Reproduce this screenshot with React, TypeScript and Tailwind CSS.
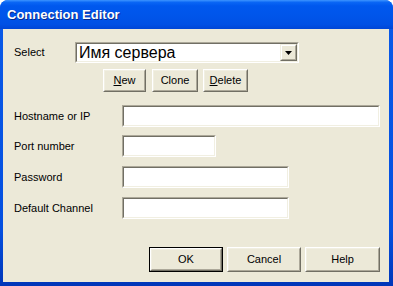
import React from "react";

function Sunken({ className = "", children }: { className?: string; children?: React.ReactNode }) {
  return (
    <div
      className={
        "border border-t-[#aca899] border-l-[#aca899] border-b-white border-r-white " + className
      }
    >
      <div className="w-full h-full border border-t-[#716f64] border-l-[#716f64] border-b-[#f1efe2] border-r-[#f1efe2] bg-white flex items-center">
        {children}
      </div>
    </div>
  );
}

function Btn({
  className = "",
  children,
  isDefault = false,
}: {
  className?: string;
  children: React.ReactNode;
  isDefault?: boolean;
}) {
  const inner = (
    <div className="w-full h-full border border-t-white border-l-white border-b-[#716f64] border-r-[#716f64]">
      <div className="w-full h-full border border-t-[#f1efe2] border-l-[#f1efe2] border-b-[#aca899] border-r-[#aca899] bg-[#ece9d8] flex items-center justify-center text-[11px] text-black">
        {children}
      </div>
    </div>
  );
  if (isDefault) {
    return <div className={"border border-black " + className}>{inner}</div>;
  }
  return <div className={className}>{inner}</div>;
}

export default function App() {
  return (
    <div
      className="w-[393px] h-[286px] flex flex-col rounded-t-[8px] overflow-hidden bg-[linear-gradient(to_bottom,#0a5ae8,#0550e0_80%,#0036b8)]"
      style={{ fontFamily: '"Liberation Sans", Arial, sans-serif' }}
    >
      <div className="h-[29px] shrink-0 flex items-center pl-[7px] pt-[1px] bg-[linear-gradient(to_bottom,#3d95ff_0%,#0a66f5_8%,#0058ee_20%,#0055ea_55%,#0050e4_85%,#0046d6_100%)]">
        <span className="text-white font-bold text-[13px] [text-shadow:1px_1px_0_#0a2a8a]">
          Connection Editor
        </span>
      </div>
      <div className="flex-1 flex flex-col ml-[3px] mr-[4px] mb-[4px] bg-[#ece9d8] pl-[11px] text-[11px] text-black">
        <div className="mt-[13px] flex items-center h-[21px]">
          <div className="w-[61px]">Select</div>
          <Sunken className="w-[224px] h-[21px]">
            <span className="pl-[2px] text-[16px] leading-none flex-1">Имя сервера</span>
            <div className="w-[17px] h-[17px] mr-[0px] border border-t-[#f1efe2] border-l-[#f1efe2] border-b-[#716f64] border-r-[#716f64]">
              <div className="w-full h-full border border-t-white border-l-white border-b-[#aca899] border-r-[#aca899] bg-[#ece9d8] flex items-center justify-center">
                <svg width="7" height="4" viewBox="0 0 7 4">
                  <path d="M0 0H7L3.5 4Z" fill="#000" />
                </svg>
              </div>
            </div>
          </Sunken>
        </div>
        <div className="mt-[6px] flex h-[23px] ml-[89px]">
          <Btn className="w-[43px] h-[23px]">
            <span>
              <span className="underline">N</span>ew
            </span>
          </Btn>
          <Btn className="w-[46px] h-[23px] ml-[6px]">Clone</Btn>
          <Btn className="w-[45px] h-[23px] ml-[5px]">
            <span>
              <span className="underline">D</span>elete
            </span>
          </Btn>
        </div>
        <div className="mt-[13px] flex items-center h-[22px]">
          <div className="w-[108px]">Hostname or IP</div>
          <Sunken className="w-[258px] h-[22px]" />
        </div>
        <div className="mt-[8px] flex items-center h-[22px]">
          <div className="w-[108px]">Port number</div>
          <Sunken className="w-[94px] h-[22px]" />
        </div>
        <div className="mt-[9px] flex items-center h-[22px]">
          <div className="w-[108px]">Password</div>
          <Sunken className="w-[167px] h-[22px]" />
        </div>
        <div className="mt-[9px] flex items-center h-[22px]">
          <div className="w-[108px]">Default Channel</div>
          <Sunken className="w-[167px] h-[22px]" />
        </div>
        <div className="mt-auto mb-[10px] mr-[9px] flex justify-end">
          <Btn isDefault className="w-[74px] h-[25px]">OK</Btn>
          <Btn className="w-[74px] h-[25px] ml-[4px]">Cancel</Btn>
          <Btn className="w-[75px] h-[25px] ml-[4px]">Help</Btn>
        </div>
      </div>
    </div>
  );
}
